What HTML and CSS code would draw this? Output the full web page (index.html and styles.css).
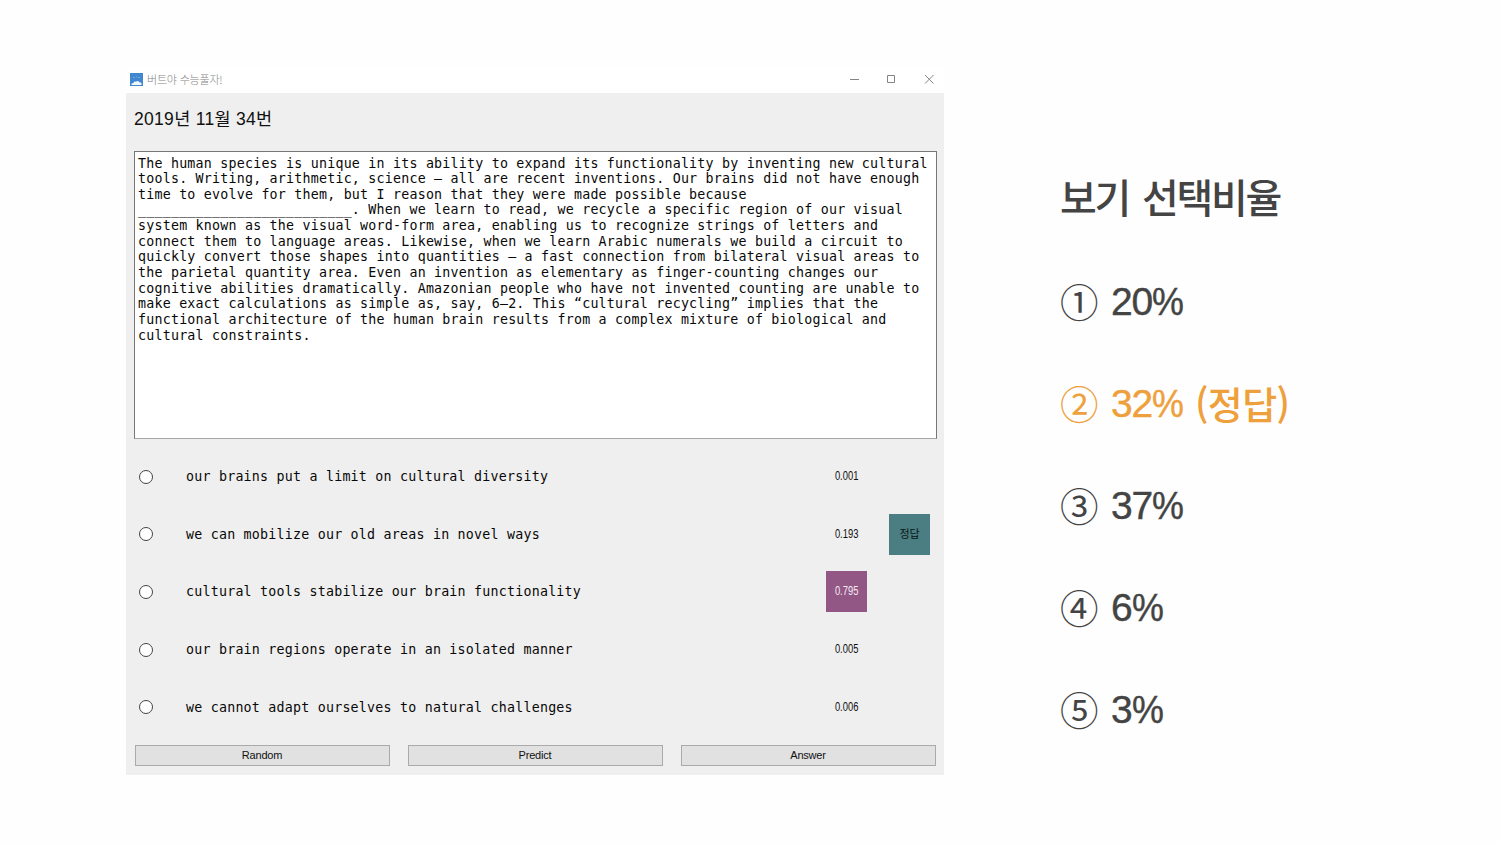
FILE: index.html
```html
<!DOCTYPE html>
<html lang="ko">
<head>
<meta charset="utf-8">
<title>버트야 수능풀자!</title>
<link rel="stylesheet" href="styles.css">
</head>
<body>
<main class="slide">
  <section class="window">
    <header class="titlebar">
      <svg class="app-icon" width="13" height="13" viewBox="0 0 13 13"><rect width="13" height="13" fill="#4288ce"/><path d="M1.500 12 Q1 10 3.500 10 Q4 8 6 8.700 Q8 7.200 9.300 9.200 Q12 9 11.500 12Z" fill="#f3f8fd"/><path d="M3 4.500h2M6 4h1M8 4.500h2" stroke="#83b5e5" stroke-width=".8"/></svg>
      <span class="app-name">버트야 수능풀자!</span>
      <svg class="controls" width="90" height="14" viewBox="0 0 90 14" fill="none" stroke="#858585"><path d="M4 7.500H13"/><path d="M41.500 3.500h7v7h-7z"/><path d="M79 3l8.500 8.500M87.500 3l-8.500 8.500"/></svg>
    </header>
    <div class="client">
      <h1 class="exam">2019년 11월 34번</h1>
      <div class="passage">The human species is unique in its ability to expand its functionality by inventing new cultural
tools. Writing, arithmetic, science – all are recent inventions. Our brains did not have enough
time to evolve for them, but I reason that they were made possible because
__________________________. When we learn to read, we recycle a specific region of our visual
system known as the visual word-form area, enabling us to recognize strings of letters and
connect them to language areas. Likewise, when we learn Arabic numerals we build a circuit to
quickly convert those shapes into quantities – a fast connection from bilateral visual areas to
the parietal quantity area. Even an invention as elementary as finger-counting changes our
cognitive abilities dramatically. Amazonian people who have not invented counting are unable to
make exact calculations as simple as, say, 6–2. This “cultural recycling” implies that the
functional architecture of the human brain results from a complex mixture of biological and
cultural constraints.</div>
      <div class="choices">
        <div class="choice"><i class="radio"></i><span class="label">our brains put a limit on cultural diversity</span><span class="score"><span class="squeeze">0.001</span></span></div>
        <div class="choice"><i class="radio"></i><span class="label">we can mobilize our old areas in novel ways</span><span class="score"><span class="squeeze">0.193</span></span><span class="answer">정답</span></div>
        <div class="choice"><i class="radio"></i><span class="label">cultural tools stabilize our brain functionality</span><span class="score predicted"><span class="squeeze">0.795</span></span></div>
        <div class="choice"><i class="radio"></i><span class="label">our brain regions operate in an isolated manner</span><span class="score"><span class="squeeze">0.005</span></span></div>
        <div class="choice"><i class="radio"></i><span class="label">we cannot adapt ourselves to natural challenges</span><span class="score"><span class="squeeze">0.006</span></span></div>
      </div>
      <div class="buttons">
        <button class="btn">Random</button>
        <button class="btn">Predict</button>
        <button class="btn">Answer</button>
      </div>
    </div>
  </section>
  <aside class="rates">
    <h2 class="rates-title">보기 선택비율</h2>
    <div class="rate"><span class="num">①</span><span class="pct">20<span class="sign">%</span></span></div>
    <div class="rate correct"><span class="num">②</span><span class="pct">32<span class="sign">%</span></span><span class="note">(정답)</span></div>
    <div class="rate"><span class="num">③</span><span class="pct">37<span class="sign">%</span></span></div>
    <div class="rate"><span class="num">④</span><span class="pct">6<span class="sign">%</span></span></div>
    <div class="rate"><span class="num">⑤</span><span class="pct">3<span class="sign">%</span></span></div>
  </aside>
</main>
</body>
</html>
```
FILE: styles.css
```css
* { box-sizing: border-box; }
body { margin: 0; background: #fefefe; font-family: "Liberation Sans", "Noto Sans CJK KR", sans-serif; }
.slide { display: flex; width: 1500px; height: 844px; overflow: hidden; padding: 66px 0 0 126px; }
.window { width: 818px; height: 709px; display: flex; flex-direction: column; }
.titlebar { height: 27px; display: flex; align-items: center; padding: 0 8px 1px 4px; background: #fff; }
.app-icon { flex: none; }
.app-name { flex: 1; margin-left: 4px; font-size: 11px; letter-spacing: -.2px; line-height: 14px; color: #858585; font-family: "Noto Sans CJK KR", sans-serif; font-weight: 300; }
.squeeze { display: inline-block; white-space: nowrap; }
.controls { flex: none; }
.client { flex: 1; background: #efefef; padding: 0 7px 0 8px; }
.exam { margin: 0; height: 58px; padding-top: 14px; font-size: 17.5px; letter-spacing: .3px; line-height: 24px; font-weight: 400; color: #111; }
.passage { height: 288px; border: 1px solid #777; border-bottom-color: #a5a5a5; background: #fff; padding: 3.5px 0 0 3px; white-space: pre; font-family: "DejaVu Sans Mono", monospace; font-size: 13.3px; letter-spacing: 0.22px; line-height: 15.64px; color: #080808; }
.choices { padding-top: 9px; }
.choice { height: 57.6px; display: grid; grid-template-columns: 52px 640px 41px 22px 41px; align-items: center; }
.radio { width: 14px; height: 14px; margin-left: 5px; border: 1px solid #444; border-radius: 50%; background: #fff; }
.label { font-family: "DejaVu Sans Mono", monospace; font-size: 13.3px; letter-spacing: 0.225px; color: #080808; white-space: pre; }
.score { height: 41px; display: grid; place-items: center; padding-bottom: 1px; font-size: 12.5px; color: #111; }
.score .squeeze { transform: scaleX(.75); }
.predicted { background: #925785; color: #f5eaf3; }
.answer { grid-column: 5; height: 41px; display: grid; place-items: center; padding-bottom: 2px; background: #4a7e82; color: #0b1415; font-family: "Noto Sans CJK KR", sans-serif; font-size: 11px; }
.buttons { display: grid; grid-template-columns: repeat(3, 255px); gap: 18px; padding-left: 1px; margin-top: 9px; }
.btn { height: 21px; border: 1px solid #aaa; border-radius: 0; background: #e1e1e1; color: #111; padding: 0 1px 0 0; font: 11px "Liberation Sans", sans-serif; letter-spacing: -.2px; }
.rates { margin-left: 117px; color: #444; }
.rates-title { margin: 0 0 0 -1px; padding-top: 100px; height: 185px; font-family: "Noto Sans CJK KR", sans-serif; font-size: 40px; letter-spacing: -2.3px; word-spacing: 4px; line-height: 60px; font-weight: 500; white-space: pre; }
.rate { height: 102px; display: flex; align-items: center; white-space: nowrap; }
.num { width: 50px; margin-left: -1px; padding-bottom: 4px; font-family: "Noto Sans CJK KR", sans-serif; font-size: 38.5px; line-height: 60px; font-weight: 400; }
.pct { margin-left: 1px; font-size: 39px; letter-spacing: -1.1px; line-height: 60px; -webkit-text-stroke: .4px currentColor; }
.sign { display: inline-block; letter-spacing: 0; transform: scaleX(.92); transform-origin: left center; }
.note { margin-left: 8px; padding-bottom: 3px; font-family: "Noto Sans CJK KR", sans-serif; font-size: 38px; letter-spacing: -.6px; font-weight: 500; line-height: 60px; }
.correct { color: #eea03c; }
```
